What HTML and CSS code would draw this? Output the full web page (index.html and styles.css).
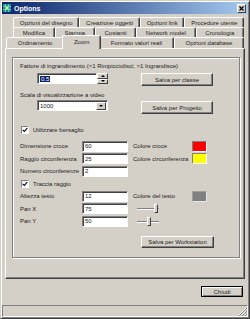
FILE: index.html
```html
<!DOCTYPE html>
<html>
<head>
  <title>Options</title>
  <link rel="stylesheet" href="styles.css">
</head>
<body>
  <div class="window">
    <div class="titlebar">
      <svg class="app-icon" width="8" height="8" viewBox="0 0 8 8">
        <rect x="0" y="0" width="8" height="8" fill="#1a8a8a"/>
        <path d="M0 2.5H8M0 5.5H8M2.5 0V8M5.5 0V8" stroke="#7fe0c8" stroke-width="0.8"/>
        <rect x="3" y="3" width="2" height="2" fill="#e8f060"/>
      </svg>
      <span class="title">Options</span>
      <div class="close-btn">
        <svg width="7" height="7" viewBox="0 0 7 7">
          <path d="M1.5 1.5L5.5 5.5M5.5 1.5L1.5 5.5" stroke="#000" stroke-width="1.2"/>
        </svg>
      </div>
    </div>

    <div class="dialog">
      <div class="tabs">
        <div class="tab-row">
          <div class="tab">Opzioni del disegno</div>
          <div class="tab">Creazione oggetti</div>
          <div class="tab">Opzioni link</div>
          <div class="tab">Procedure utente</div>
        </div>
        <div class="tab-row">
          <div class="tab">Modifica</div>
          <div class="tab">Stampa</div>
          <div class="tab">Costanti</div>
          <div class="tab">Network model</div>
          <div class="tab">Cronologia</div>
        </div>
        <div class="tab-row front">
          <div class="tab">Ordinamento</div>
          <div class="tab active">Zoom</div>
          <div class="tab">Formato valori reali</div>
          <div class="tab">Opzioni database</div>
        </div>
      </div>

      <div class="panel">
        <div class="group">
          <div class="caption">Fattore di ingrandimento (&lt;1 Rimpicciolisci, &gt;1 Ingrandisce)</div>
          <div class="zoom-row">
            <div class="spin">
              <div class="field spin-field"><span class="selected">0.5</span></div>
              <div class="spin-btns">
                <div class="spin-btn"><span class="arrow-up"></span></div>
                <div class="spin-btn"><span class="arrow-down"></span></div>
              </div>
            </div>
            <button class="btn">Salva per classe</button>
          </div>

          <div class="caption scale">Scala di visualizzazione a video</div>
          <div class="scale-row">
            <div class="field select">
              <span class="select-value">1000</span>
              <div class="drop-btn"><span class="arrow-down"></span></div>
            </div>
            <button class="btn">Salva per Progetto</button>
          </div>

          <div class="check-row">
            <span class="check"><svg width="6" height="6" viewBox="0 0 6 6"><path d="M0.7 2.8L2.3 4.4L5.3 1.2" fill="none" stroke="#000" stroke-width="1.1"/></svg></span>
            <span>Utilizzare bersaglio</span>
          </div>

          <div class="fields">
            <span>Dimensione croce</span>
            <div class="field">60</div>
            <span class="label2">Colore croce</span>
            <span class="swatch red"></span>

            <span>Raggio circonferenza</span>
            <div class="field">25</div>
            <span class="label2">Colore circonferenza</span>
            <span class="swatch yellow"></span>

            <span>Numero circonferenze</span>
            <div class="field">2</div>
            <span></span>
            <span></span>

            <div class="check-row in-grid">
              <span class="check"><svg width="6" height="6" viewBox="0 0 6 6"><path d="M0.7 2.8L2.3 4.4L5.3 1.2" fill="none" stroke="#000" stroke-width="1.1"/></svg></span>
              <span>Traccia raggio</span>
            </div>

            <span>Altezza testo</span>
            <div class="field">12</div>
            <span class="label2">Colore del testo</span>
            <span class="swatch gray"></span>

            <span>Pan X</span>
            <div class="field">75</div>
            <div class="slider-cell">
              <div class="slider"><span class="track"></span><span class="thumb" style="left: 17px"></span></div>
            </div>
            <span></span>

            <span>Pan Y</span>
            <div class="field">50</div>
            <div class="slider-cell">
              <div class="slider"><span class="track"></span><span class="thumb" style="left: 10px"></span></div>
            </div>
            <span></span>
          </div>

          <div class="ws-row">
            <button class="btn wide">Salva per Workstation</button>
          </div>
        </div>
      </div>

      <div class="footer">
        <button class="btn default">Chiudi</button>
      </div>
    </div>

    <div class="statusbar">
      <svg class="grip" width="10" height="10" viewBox="0 0 10 10">
        <path d="M9 2L2 9M9 5L5 9M9 8L8 9" stroke="#fff" stroke-width="1"/>
        <path d="M10 2L2 10M10 5L5 10M10 8L8 10" stroke="#808080" stroke-width="1"/>
      </svg>
    </div>
  </div>
</body>
</html>
```

FILE: styles.css
```css
body {
  margin: 0;
  background-color: #D4D0C8;
}

.window {
  width: 250px;
  height: 319px;
  box-sizing: border-box;
  background-color: #D4D0C8;
  border: 1px solid;
  border-color: #D4D0C8 #404040 #404040 #D4D0C8;
  box-shadow: inset 1px 1px 0 #fff, inset -1px -1px 0 #808080;
  padding: 1px;
  display: flex;
  flex-direction: column;
  font-family: "Liberation Sans", Arial, sans-serif;
  font-size: 6px;
  color: #222;
}

/* title bar */
.titlebar {
  height: 12px;
  flex: none;
  display: flex;
  align-items: center;
  padding: 0 2px 0 1px;
  background: linear-gradient(to right, #0A246A, #A6CAF0);
}
.app-icon {
  margin-right: 3px;
}
.title {
  color: #fff;
  font-weight: bold;
  font-size: 7px;
  flex: 1;
}
.close-btn {
  width: 9px;
  height: 9px;
  box-sizing: border-box;
  background-color: #D4D0C8;
  border: 1px solid;
  border-color: #fff #404040 #404040 #fff;
  display: flex;
  align-items: center;
  justify-content: center;
}

.dialog {
  flex: 1;
  display: flex;
  flex-direction: column;
  padding: 3px 3px 0 3px;
}

/* tabs */
.tabs {
  display: flex;
  flex-direction: column;
}
.tab-row {
  display: flex;
  height: 10px;
  margin: 0 1px 0 8px;
}
.tab-row.front {
  height: 11px;
  margin-left: 1px;
  position: relative;
  z-index: 1;
}
.tab {
  flex: 1 1 auto;
  display: flex;
  align-items: center;
  justify-content: center;
  box-sizing: border-box;
  padding: 0 2px;
  white-space: nowrap;
  border: 1px solid;
  border-bottom: none;
  border-color: #fff #404040 transparent #fff;
  box-shadow: inset -1px 0 0 #808080;
  border-radius: 2px 2px 0 0;
  background-color: #D4D0C8;
}
.tab.active {
  align-self: flex-start;
  height: 14px;
  margin: -2px -2px 0 -2px;
  padding-bottom: 2px;
  position: relative;
  z-index: 2;
}

/* page */
.panel {
  border: 1px solid;
  border-color: #fff #404040 #404040 #fff;
  box-shadow: inset -1px -1px 0 #808080;
  padding: 8px 4px 20px 6px;
}
.group {
  border: 1px solid #808080;
  box-shadow: inset 1px 1px 0 #fff, 1px 1px 0 #fff;
  padding: 4px 0 9px 7px;
}
.caption {
  height: 8px;
  line-height: 8px;
  white-space: nowrap;
}
.caption.scale {
  margin-top: 5px;
}

.field {
  height: 11px;
  box-sizing: border-box;
  background-color: #fff;
  border: 1px solid;
  border-color: #808080 #fff #fff #808080;
  box-shadow: inset 1px 1px 0 #404040;
  padding: 0 2px;
  display: flex;
  align-items: center;
}

.btn {
  width: 72px;
  height: 13px;
  box-sizing: border-box;
  padding: 0;
  font: inherit;
  color: #222;
  background-color: #D4D0C8;
  border: 1px solid;
  border-color: #fff #404040 #404040 #fff;
  box-shadow: inset -1px -1px 0 #808080;
}
.btn.wide {
  width: 73px;
  height: 12px;
}

.zoom-row {
  display: flex;
  height: 13px;
  margin-top: 3px;
}
.spin {
  display: flex;
  height: 11px;
  margin-left: 17px;
  margin-right: 33px;
}
.spin-field {
  width: 60px;
}
.selected {
  background-color: #0A246A;
  color: #fff;
  padding: 0 1px;
}
.spin-btns {
  width: 11px;
  display: flex;
  flex-direction: column;
}
.spin-btn, .drop-btn {
  flex: 1;
  box-sizing: border-box;
  background-color: #D4D0C8;
  border: 1px solid;
  border-color: #fff #404040 #404040 #fff;
  display: flex;
  align-items: center;
  justify-content: center;
}
.arrow-up, .arrow-down {
  width: 0;
  height: 0;
  border-left: 2px solid transparent;
  border-right: 2px solid transparent;
}
.arrow-up {
  border-bottom: 2px solid #000;
}
.arrow-down {
  border-top: 2px solid #000;
}

.scale-row {
  display: flex;
  height: 14px;
  margin-top: 1px;
}
.select {
  width: 71px;
  margin-left: 17px;
  margin-right: 33px;
  padding-right: 1px;
}
.select-value {
  flex: 1;
}
.drop-btn {
  flex: none;
  width: 10px;
  height: 8px;
}
.scale-row .btn {
  margin-top: 1px;
}

.check-row {
  display: flex;
  align-items: center;
  gap: 4px;
  height: 8px;
  margin-top: 12px;
  margin-left: 1px;
}
.check-row.in-grid {
  grid-column: 1 / -1;
  margin: 0 0 0 1px;
}
.check {
  width: 8px;
  height: 8px;
  box-sizing: border-box;
  background-color: #fff;
  border: 1px solid;
  border-color: #808080 #fff #fff #808080;
  display: flex;
  align-items: center;
  justify-content: center;
}

.fields {
  display: grid;
  grid-template-columns: 62px 46px 64px 15px;
  grid-auto-rows: 12.5px;
  align-items: center;
  margin-top: 6px;
  white-space: nowrap;
}
.label2 {
  padding-left: 5px;
}
.swatch {
  height: 11px;
  box-sizing: border-box;
  border: 1px solid;
  border-color: #808080 #fff #fff #808080;
}
.swatch.red {
  background-color: #FF0000;
}
.swatch.yellow {
  background-color: #FFFF00;
}
.swatch.gray {
  background-color: #808080;
  border-color: #a0a0a0 #e8e8e8 #e8e8e8 #a0a0a0;
}

.slider-cell {
  padding-left: 9px;
}
.slider {
  width: 22px;
  height: 9px;
  position: relative;
}
.track {
  position: absolute;
  left: 0;
  right: 0;
  top: 4px;
  height: 2px;
  box-sizing: border-box;
  border-top: 1px solid #808080;
  border-bottom: 1px solid #fff;
}
.thumb {
  position: absolute;
  top: 0;
  width: 4px;
  height: 9px;
  box-sizing: border-box;
  background-color: #D4D0C8;
  border: 1px solid;
  border-color: #fff #404040 #404040 #fff;
}

.ws-row {
  margin-top: 8.5px;
  margin-left: 121px;
}

.footer {
  display: flex;
  justify-content: flex-end;
  margin: 7px 2px 8px 0;
}
.btn.default {
  width: 42px;
  height: 11px;
  border-color: #000;
  box-shadow: inset 1px 1px 0 #fff, inset -1px -1px 0 #808080;
}

.statusbar {
  height: 12px;
  flex: none;
  box-sizing: border-box;
  border: 1px solid;
  border-color: #808080 #fff #fff #808080;
  display: flex;
  justify-content: flex-end;
  align-items: flex-end;
}
```
